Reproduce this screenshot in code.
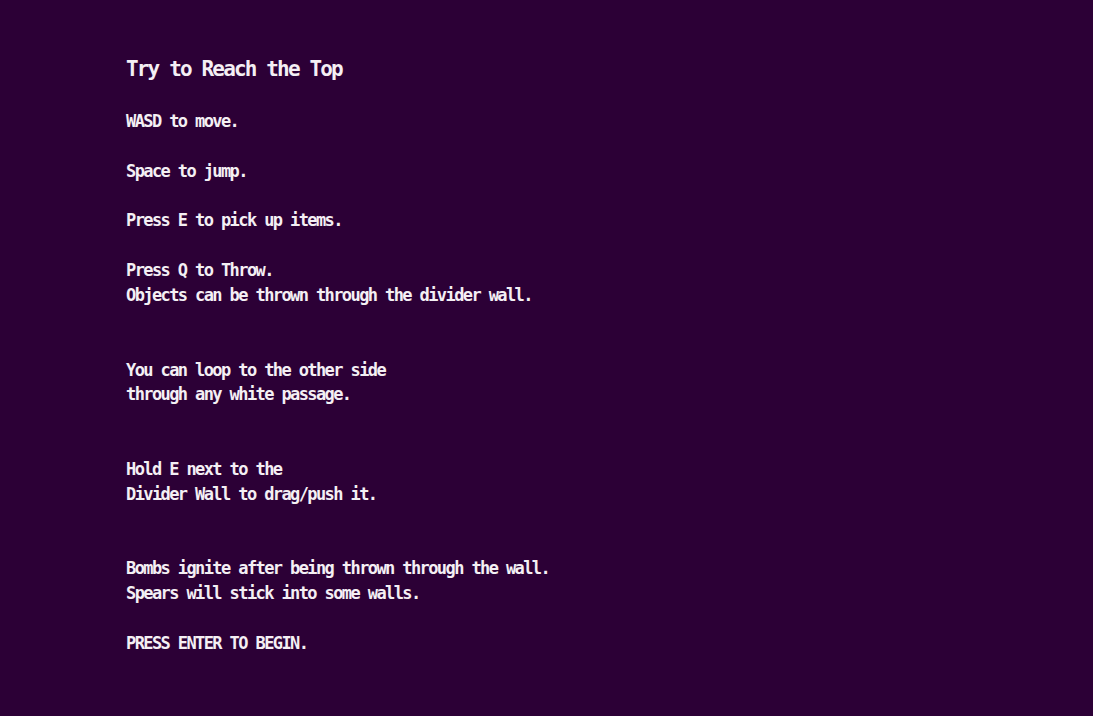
const lines = [
  "WASD to move.",
  "",
  "Space to jump.",
  "",
  "Press E to pick up items.",
  "",
  "Press Q to Throw.",
  "Objects can be thrown through the divider wall.",
  "",
  "",
  "You can loop to the other side",
  "through any white passage.",
  "",
  "",
  "Hold E next to the",
  "Divider Wall to drag/push it.",
  "",
  "",
  "Bombs ignite after being thrown through the wall.",
  "Spears will stick into some walls.",
  "",
  "PRESS ENTER TO BEGIN.",
];

export default function App() {
  return (
    <div className="h-[716px] w-full overflow-hidden bg-[#2c0036] pl-[126px] pt-[54px] text-[#f4eff4] [font-family:'DejaVu_Sans_Mono','Liberation_Mono',monospace]">
      <h1 className="text-[21px] font-bold leading-[30px] tracking-[-1.85px]">Try to Reach the Top</h1>
      <div className="mt-[25px] whitespace-pre text-[17px] font-bold leading-[24.86px] tracking-[-1.6px]">
        {lines.map((line, i) => (
          <div key={i} className="h-[24.86px]">
            {line}
          </div>
        ))}
      </div>
    </div>
  );
}
